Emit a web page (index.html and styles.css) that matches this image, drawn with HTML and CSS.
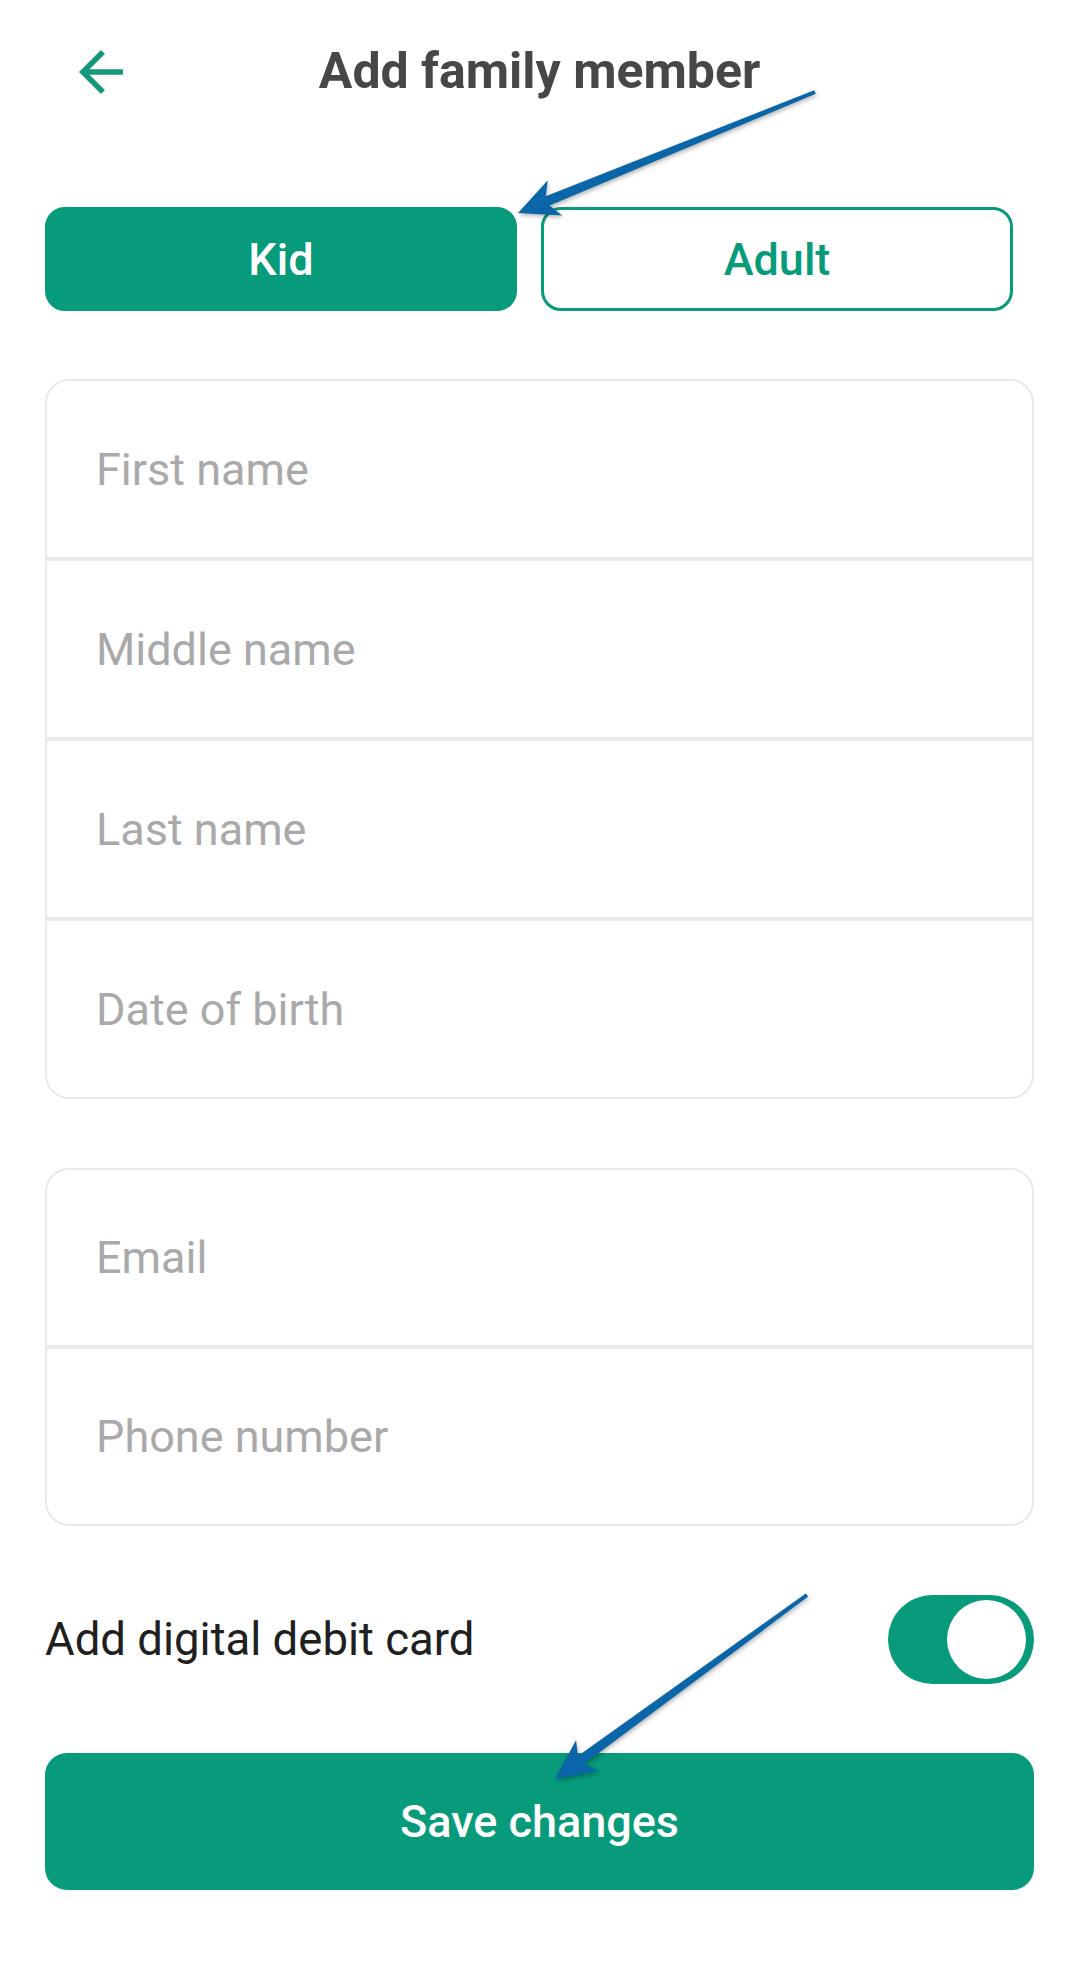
FILE: index.html
```html
<!DOCTYPE html>
<html lang="en">
<head>
    <meta charset="UTF-8">
    <meta name="viewport" content="width=device-width, initial-scale=1.0">
    <title>Add family member</title>
    <link rel="stylesheet" href="styles.css">
</head>
<body>
    <div class="page">
        <header class="top-bar">
            <button class="back" type="button" aria-label="Back">
                <svg viewBox="0 0 24 24" width="66" height="66">
                    <path d="M20 11H7.83l5.59-5.59L12 4l-8 8 8 8 1.41-1.41L7.83 13H20v-2z" fill="currentColor"/>
                </svg>
            </button>
            <h1>Add family member</h1>
        </header>

        <div class="segments">
            <button class="segment active" type="button">Kid</button>
            <button class="segment" type="button">Adult</button>
        </div>

        <form class="member-form">
            <div class="field-group">
                <input type="text" name="first-name" placeholder="First name">
                <input type="text" name="middle-name" placeholder="Middle name">
                <input type="text" name="last-name" placeholder="Last name">
                <input type="text" name="birth-date" placeholder="Date of birth">
            </div>

            <div class="field-group">
                <input type="email" name="email" placeholder="Email">
                <input type="tel" name="phone" placeholder="Phone number">
            </div>

            <label class="switch-row">
                <span>Add digital debit card</span>
                <input type="checkbox" name="debit-card" checked>
                <span class="switch"></span>
            </label>

            <button class="save" type="button">Save changes</button>
        </form>
    </div>

    <svg class="annotations" width="1080" height="1969" viewBox="0 0 1080 1969">
        <polygon points="518,213 547.8,180.3 545.7,196.3 814.2,90.2 815.8,93.8 549.5,205.5 562.2,215.5"/>
        <polygon points="555,1779 576.1,1740 577.9,1756.1 805.8,1593.4 808.2,1596.6 583.9,1764.1 598.5,1770.8"/>
    </svg>
</body>
</html>
```

FILE: styles.css
```css
body {
    margin: 0;
    position: relative;
    background: #ffffff;
    font-family: Roboto, "Noto Sans", sans-serif;
}

.page {
    width: 1080px;
    box-sizing: border-box;
    padding: 0 46px 0 45px;
}

.top-bar {
    height: 142px;
    display: grid;
    grid-template-columns: 1fr auto 1fr;
    align-items: center;
}

.top-bar .back {
    justify-self: start;
    margin: 2px 0 0 23px;
    padding: 0;
    border: none;
    background: none;
    color: #16967a;
    display: flex;
}

.top-bar h1 {
    margin: 0;
    font-size: 50px;
    font-weight: 700;
    color: #474747;
}

.segments {
    width: 968px;
    margin-top: 65px;
    display: flex;
    gap: 24px;
}

.segment {
    flex: 1;
    height: 104px;
    box-sizing: border-box;
    border: 3px solid #079a7b;
    border-radius: 20px;
    background: #ffffff;
    color: #079a7b;
    font-family: Roboto, sans-serif;
    font-size: 45px;
    font-weight: 500;
}

.segment.active {
    background: #079a7b;
    color: #ffffff;
}

.member-form {
    display: flex;
    flex-direction: column;
}

.field-group {
    margin-top: 68px;
    display: flex;
    flex-direction: column;
}

.field-group + .field-group {
    margin-top: 69px;
}

.field-group input {
    height: 180px;
    box-sizing: border-box;
    margin: 0;
    padding: 0 0 0 49px;
    border: 2px solid #e9e9e9;
    background: #ffffff;
    font-family: Roboto, sans-serif;
    font-size: 45px;
    color: #222222;
    outline: none;
}

.field-group input::placeholder {
    color: #a9a9a9;
}

.field-group input:first-child {
    border-radius: 24px 24px 0 0;
}

.field-group input:last-child {
    border-radius: 0 0 24px 24px;
}

.field-group + .field-group input {
    height: 179px;
}

.switch-row {
    margin-top: 69px;
    height: 89px;
    display: flex;
    align-items: center;
    justify-content: space-between;
    font-size: 45.5px;
    color: #202020;
}

.switch-row input {
    display: none;
}

.switch {
    position: relative;
    width: 146px;
    height: 89px;
    border-radius: 45px;
    background: #079a7b;
}

.switch::after {
    content: "";
    position: absolute;
    top: 5px;
    right: 8px;
    width: 79px;
    height: 79px;
    border-radius: 50%;
    background: #ffffff;
}

.save {
    margin-top: 69px;
    height: 137px;
    border: none;
    border-radius: 22px;
    background: #079a7b;
    color: #ffffff;
    font-family: Roboto, sans-serif;
    font-size: 45px;
    font-weight: 500;
}

.annotations {
    position: absolute;
    top: 0;
    left: 0;
    pointer-events: none;
    fill: #0a66a8;
    filter: drop-shadow(1px 2px 2px rgba(0, 0, 0, 0.3));
}
```
